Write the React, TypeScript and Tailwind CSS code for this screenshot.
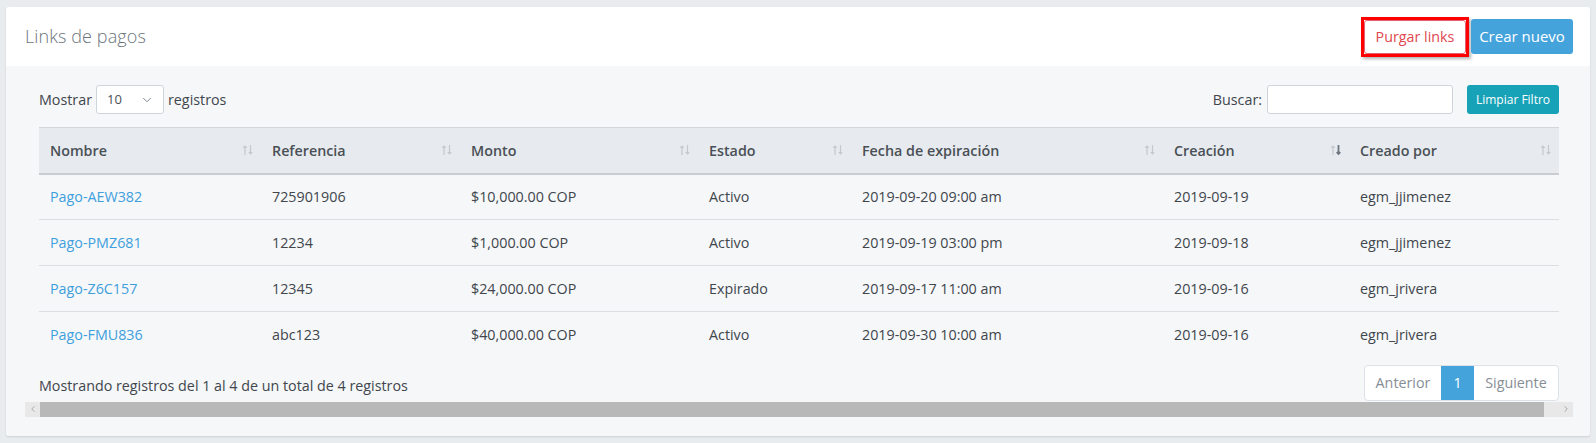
import { ChevronDown, ChevronLeft, ChevronRight } from 'lucide-react';

const font = { fontFamily: '"Open Sans", "Noto Sans", sans-serif' };

const columns = [
    { label: 'Nombre', width: 222 },
    { label: 'Referencia', width: 199 },
    { label: 'Monto', width: 238 },
    { label: 'Estado', width: 153 },
    { label: 'Fecha de expiración', width: 312 },
    { label: 'Creación', width: 186, sorted: true },
    { label: 'Creado por', width: 210 },
];

const rows = [
    ['Pago-AEW382', '725901906', '$10,000.00 COP', 'Activo', '2019-09-20 09:00 am', '2019-09-19', 'egm_jjimenez'],
    ['Pago-PMZ681', '12234', '$1,000.00 COP', 'Activo', '2019-09-19 03:00 pm', '2019-09-18', 'egm_jjimenez'],
    ['Pago-Z6C157', '12345', '$24,000.00 COP', 'Expirado', '2019-09-17 11:00 am', '2019-09-16', 'egm_jrivera'],
    ['Pago-FMU836', 'abc123', '$40,000.00 COP', 'Activo', '2019-09-30 10:00 am', '2019-09-16', 'egm_jrivera'],
];

/** Little up/down pair shown at the right of each sortable header. */
function SortIcon({ active = false }: { active?: boolean }) {
    return (
        <svg width="12" height="12" viewBox="0 0 12 12" className="shrink-0">
            <g stroke="#c3c8cd" strokeWidth="1.2" fill="none">
                <path d="M3 11V2M1.2 3.8L3 2l1.8 1.8" />
            </g>
            <g stroke={active ? '#6c757d' : '#c3c8cd'} strokeWidth={active ? 1.8 : 1.2} fill="none">
                <path d="M8.5 1v9M6.7 8.2l1.8 1.8 1.8-1.8" />
            </g>
        </svg>
    );
}

export default function App() {
    return (
        <div className="min-h-[443px] bg-[#e9ecef] pt-[7px] pl-[6px] pr-[6px] pb-[6px]" style={font}>
            <div className="rounded-[3px] overflow-hidden shadow-[0_1px_2px_rgba(0,0,0,0.12)]">
                {/* header */}
                <div className="h-[59px] bg-white flex items-center justify-between pl-[19px] pr-[17px]">
                    <h1 className="text-[18px] font-light text-[#6c757d] tracking-[0.1px]">Links de pagos</h1>
                    <div className="flex items-center gap-[2px]">
                        <div className="border-[3px] border-[#f00] shadow-[2px_2px_3px_rgba(0,0,0,0.3)]">
                            <button
                                type="button"
                                className="block h-[34px] w-[102px] rounded-[3px] border border-[#e4606d] bg-white text-[14.3px] text-[#e0474f]"
                            >
                                Purgar links
                            </button>
                        </div>
                        <button type="button" className="h-[35px] w-[102px] rounded-[3px] bg-[#45a3dc] text-[15px] text-white">
                            Crear nuevo
                        </button>
                    </div>
                </div>

                {/* body */}
                <div className="bg-[#f6f7f9] pt-[19px] pb-[19px] pl-[19px] pr-[17px]">
                    <div className="px-[14px]">
                        <div className="flex items-center justify-between h-[29px] text-[14.3px] text-[#3f464d]">
                            <div className="flex items-center gap-[4px]">
                                <span>Mostrar</span>
                                <div className="h-[29px] w-[68px] rounded-[3px] border border-[#ced4da] bg-white flex items-center justify-between pl-[10px] pr-[9px]">
                                    <span className="text-[13px] text-[#495057]">10</span>
                                    <ChevronDown className="w-[14px] h-[14px] text-[#6c757d]" strokeWidth={1.5} />
                                </div>
                                <span>registros</span>
                            </div>
                            <div className="flex items-center">
                                <span className="mr-[5px]">Buscar:</span>
                                <div className="h-[29px] w-[186px] rounded-[3px] border border-[#ced4da] bg-white" />
                                <button
                                    type="button"
                                    className="ml-[14px] h-[29px] w-[92px] rounded-[3px] bg-[#17a2b8] text-[12px] text-white"
                                >
                                    Limpiar Filtro
                                </button>
                            </div>
                        </div>

                        <table className="mt-[13px] w-full table-fixed border-collapse text-[14.3px]">
                            <colgroup>
                                {columns.map((c) => (
                                    <col key={c.label} style={{ width: c.width }} />
                                ))}
                            </colgroup>
                            <thead>
                                <tr className="h-[46px] bg-[#e7ebef] border-t border-[#d3d7db] border-b-2 border-b-[#c9cdd1]">
                                    {columns.map((c) => (
                                        <th key={c.label} className="pl-[11px] pr-[7px] text-left font-semibold text-[#4a5056]">
                                            <div className="flex items-center justify-between">
                                                <span>{c.label}</span>
                                                <SortIcon active={c.sorted} />
                                            </div>
                                        </th>
                                    ))}
                                </tr>
                            </thead>
                            <tbody>
                                {rows.map((r, i) => (
                                    <tr key={r[0]} className={`h-[46px] ${i < rows.length - 1 ? 'border-b border-[#dcdfe2]' : ''}`}>
                                        {r.map((v, j) => (
                                            <td key={j} className={`px-[11px] ${j === 0 ? 'text-[#3e9fdc]' : 'text-[#40464c]'}`}>
                                                {v}
                                            </td>
                                        ))}
                                    </tr>
                                ))}
                            </tbody>
                        </table>

                        <div className="mt-[7px] flex items-end justify-between">
                            <span className="text-[14.3px] text-[#40464c] mb-[4px]">
                                Mostrando registros del 1 al 4 de un total de 4 registros
                            </span>
                            <div className="flex h-[36px] rounded-[4px] border border-[#dee2e6] bg-white text-[14.3px] overflow-hidden">
                                <span className="w-[76px] flex items-center justify-center text-[#868e96]">Anterior</span>
                                <span className="w-[33px] flex items-center justify-center bg-[#45a3dc] text-white">1</span>
                                <span className="w-[84px] flex items-center justify-center text-[#868e96]">Siguiente</span>
                            </div>
                        </div>
                    </div>

                    {/* horizontal scrollbar */}
                    <div className="mt-[1px] h-[15px] flex bg-[#e8e8e8]">
                        <div className="w-[15px] flex items-center justify-center">
                            <ChevronLeft className="w-[10px] h-[10px] text-[#888]" strokeWidth={1.5} />
                        </div>
                        <div className="w-[1504px] bg-[#b8b8b8]" />
                        <div className="flex-1" />
                        <div className="w-[15px] flex items-center justify-center">
                            <ChevronRight className="w-[10px] h-[10px] text-[#888]" strokeWidth={1.5} />
                        </div>
                    </div>
                </div>
            </div>
        </div>
    );
}
